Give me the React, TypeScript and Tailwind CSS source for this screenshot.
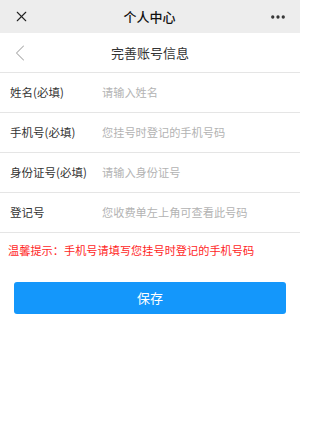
import { X, MoreHorizontal, ChevronLeft } from 'lucide-react';

const rows = [
  { label: '姓名(必填)', placeholder: '请输入姓名' },
  { label: '手机号(必填)', placeholder: '您挂号时登记的手机号码' },
  { label: '身份证号(必填)', placeholder: '请输入身份证号' },
  { label: '登记号', placeholder: '您收费单左上角可查看此号码' },
];

export default function App() {
  return (
    <div
      className="w-[300px] h-[440px] bg-white"
      style={{ fontFamily: '"Noto Sans CJK SC", "Noto Sans", sans-serif' }}
    >
      <header className="h-[33px] bg-[#ededed] flex items-center justify-between px-[13px]">
        <X size={17} strokeWidth={1.5} className="text-[#222]" />
        <h1 className="text-[13px] font-medium text-[#111]">个人中心</h1>
        <MoreHorizontal size={18} strokeWidth={2.4} className="text-[#333]" />
      </header>

      <div className="relative h-[40px] flex items-center justify-center border-b border-[#e5e5e5]">
        <ChevronLeft size={28} strokeWidth={0.9} className="absolute left-[6px] text-[#aaa]" />
        <h2 className="text-[13px] text-[#333]">完善账号信息</h2>
      </div>

      {rows.map((row) => (
        <div key={row.label} className="h-[40px] flex items-center border-b border-[#e5e5e5] px-[10px]">
          <span className="w-[92px] text-[11.5px] text-[#333]">{row.label}</span>
          <input
            placeholder={row.placeholder}
            className="flex-1 text-[11.2px] outline-none placeholder:text-[#b3b3b3]"
          />
        </div>
      ))}

      <p className="px-[8px] mt-[9px] text-[11.2px] text-[#ff1e1e]">温馨提示：手机号请填写您挂号时登记的手机号码</p>

      <div className="px-[14px] mt-[23px]">
        <button className="w-full h-[32px] rounded-[3px] bg-[#1497fb] text-white text-[13px]">保存</button>
      </div>
    </div>
  );
}
